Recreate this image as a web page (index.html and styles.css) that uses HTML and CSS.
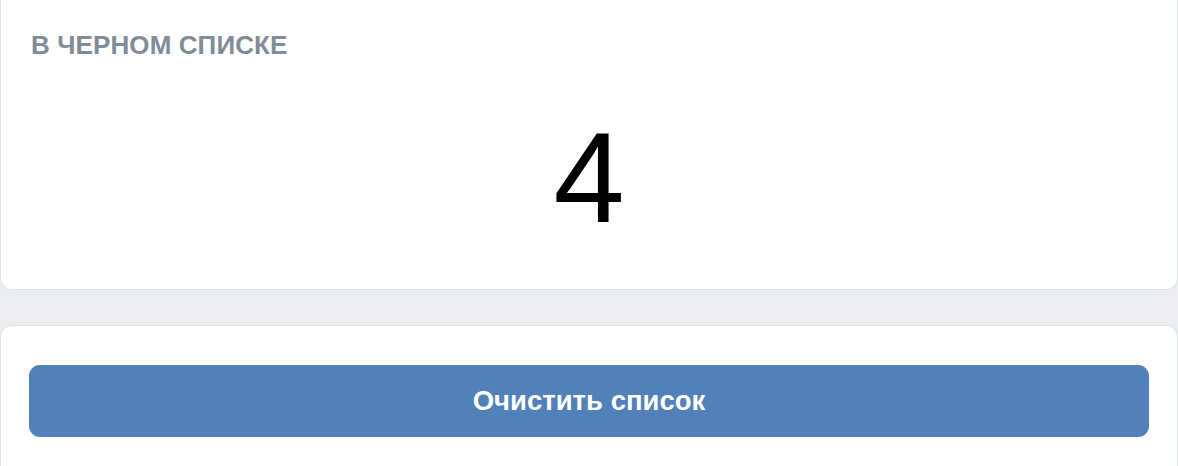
FILE: index.html
```html
<!DOCTYPE html>
<html lang="ru">
<head>
<meta charset="utf-8">
<link rel="stylesheet" href="styles.css">
</head>
<body>
<div class="page">
  <section class="card card-top">
    <div class="header">В черном списке</div>
    <div class="count">4</div>
  </section>
  <section class="card card-bottom">
    <button class="btn">Очистить список</button>
  </section>
</div>
</body>
</html>
```
FILE: styles.css
```css
html, body {
  margin: 0;
  padding: 0;
  background: #ebedf0;
  font-family: "Liberation Sans", Arial, sans-serif;
}
.page {
  display: flex;
  flex-direction: column;
  gap: 35px;
}
.card {
  background: #ffffff;
  border: 1px solid #dce1e6;
}
.card-top {
  border-top: none;
  border-radius: 0 0 12px 12px;
  padding: 29px 30px 47px;
}
.card-bottom {
  border-bottom: none;
  border-radius: 12px 12px 0 0;
  padding: 39px 28px 40px;
}
.header {
  font-size: 26px;
  line-height: 32px;
  font-weight: 700;
  text-transform: uppercase;
  color: #818c99;
  letter-spacing: 0.1px;
}
.count {
  margin-top: 53px;
  font-size: 128px;
  line-height: 128px;
  color: #000;
  text-align: center;
}
.btn {
  display: block;
  width: 100%;
  height: 72px;
  border: none;
  border-radius: 11px;
  background: #5181b8;
  color: #fff;
  font-family: "Liberation Sans", Arial, sans-serif;
  font-size: 27.5px;
  font-weight: 700;
}
```
